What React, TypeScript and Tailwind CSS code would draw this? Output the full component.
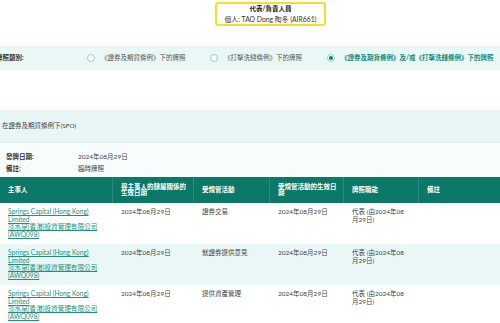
import React from 'react'

const font = { fontFamily: 'Lato, "Noto Sans CJK TC", sans-serif' }

const options = [
  { label: '《證券及期貨條例》下的牌照', width: 'w-[123px]', checked: false },
  { label: '《打擊洗錢條例》下的牌照', width: 'w-[117px]', checked: false },
  { label: '《證券及期貨條例》及/或《打擊洗錢條例》下的牌照', width: 'flex-1', checked: true },
]

const cols = [
  { title: '主事人', w: 'w-[113px]' },
  { title: '與主事人的隸屬關係的生效日期', w: 'w-[81px]' },
  { title: '受規管活動', w: 'w-[76px]' },
  { title: '受規管活動的生效日期', w: 'w-[74px]' },
  { title: '牌照職能', w: 'w-[75px]' },
  { title: '備註', w: 'flex-1' },
]

const rows = ['證券交易', '就證券提供意見', '提供資產管理']

export default function App() {
  return (
    <div className="w-[500px] h-[323px] overflow-hidden bg-white text-[6.5px] text-[#333]" style={font}>
      <div className="h-[46px] flex justify-center pl-[41px]">
        <div className="mt-[2px] h-[24px] w-[111px] border-2 border-[#f3df2a] rounded-[3px] flex flex-col items-center justify-center leading-[10px]">
          <div className="font-bold text-[#222]">代表/負責人員</div>
          <div className="text-[#333] text-[6.8px]">個人: TAO Dong 陶冬 (AIR661)</div>
        </div>
      </div>

      <div className="h-[24px] bg-[#e9f8f7] flex items-center">
        <div className="w-[91px] -ml-[4px] font-bold text-[#333]">牌照類別:</div>
        {options.map(o => (
          <div key={o.label} className={`${o.width} flex items-center gap-[6px]`}>
            <span className="w-[8px] h-[8px] rounded-full border border-[#8fcfc7] bg-white flex items-center justify-center shrink-0">
              {o.checked && <span className="w-[4px] h-[4px] rounded-full bg-[#127a6c]" />}
            </span>
            <span className={o.checked ? 'text-[#1a8a7b] font-bold whitespace-nowrap' : 'text-[#555] whitespace-nowrap'}>{o.label}</span>
          </div>
        ))}
      </div>

      <div className="h-[40px]" />

      <div className="h-[33px] bg-[#e8f7f6] border-b border-[#dcefee] flex items-center pl-[2px] text-[#444]">
        在證券及期貨條例下(SFO)
      </div>

      <div className="h-[34px] bg-[#f7fcfc] pt-[8px] pl-[6px] leading-[12px]">
        <div className="flex">
          <div className="w-[72px] font-bold text-[#333]">發牌日期:</div>
          <div className="text-[#444]">2024年08月29日</div>
        </div>
        <div className="flex">
          <div className="w-[72px] font-bold text-[#333]">備註:</div>
          <div className="text-[#444]">臨時牌照</div>
        </div>
      </div>

      <div className="h-[26px] bg-[#0b7868] flex text-white font-bold leading-[6px]">
        {cols.map((c, i) => (
          <div key={c.title} className={`${c.w} flex items-center pl-[8px] pr-[3px] ${i < cols.length - 1 ? 'border-r border-[#2b8a7d]' : ''}`}>
            <span>{c.title}</span>
          </div>
        ))}
      </div>

      {rows.map((activity, i) => (
        <div key={activity} className={`h-[41px] flex pt-[5px] leading-[7.7px] ${i === 1 ? 'bg-[#e9f8f7]' : 'bg-white'}`}>
          <div className="w-[113px] pl-[8px] pr-[4px]">
            <a href="#" className="block text-[#23907f] underline text-[6.6px] leading-[7.7px]">
              Springs Capital (Hong Kong)<br />Limited<br />淡水泉(香港)投資管理有限公司<br />(AWQ098)
            </a>
          </div>
          <div className="w-[81px] px-[8px] text-[#444]">2024年08月29日</div>
          <div className="w-[76px] px-[8px] text-[#444]">{activity}</div>
          <div className="w-[74px] px-[8px] text-[#444]">2024年08月29日</div>
          <div className="w-[75px] pl-[8px] pr-[12px] text-[#444]">代表 (由2024年08月29日)</div>
          <div className="flex-1 px-[8px]" />
        </div>
      ))}
    </div>
  )
}
